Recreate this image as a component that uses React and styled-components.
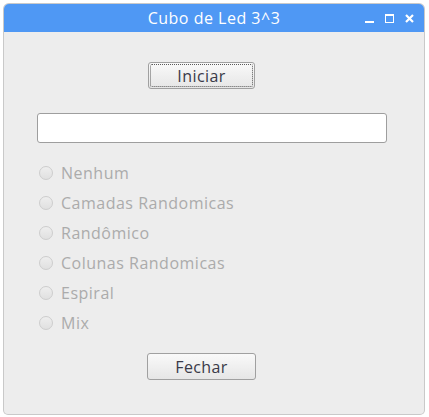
import React from "react";
import styled, { createGlobalStyle } from "styled-components";

const Global = createGlobalStyle`
  html, body { margin: 0; padding: 0; background: #ffffff; }
  body { font-family: "Open Sans", "DejaVu Sans", sans-serif; }
`;

const Page = styled.div`
  width: 429px;
  height: 417px;
  padding: 4px 0 0 4px;
  box-sizing: border-box;
  position: relative;
  overflow: hidden;
`;

const Window = styled.div`
  width: 420px;
  height: 410px;
  display: flex;
  flex-direction: column;
  border-radius: 5px 5px 4px 4px;
  overflow: hidden;
  box-shadow: 0 0 0 1px #c9c9c9;
  background: #ededed;
`;

const TitleBar = styled.div`
  height: 28px;
  background: #4f98f4;
  display: flex;
  align-items: center;
  justify-content: center;
  position: relative;
  flex-shrink: 0;
`;

const Title = styled.span`
  color: #ffffff;
  font-size: 16px;
  letter-spacing: 0.5px;
`;

const Controls = styled.div`
  position: absolute;
  right: 10px;
  top: 0;
  height: 28px;
  display: flex;
  align-items: center;
  gap: 11px;
`;

const Body = styled.div`
  flex: 1;
  display: flex;
  flex-direction: column;
  padding: 30px 0 0 33px;
`;

const Button = styled.button`
  width: ${(p) => p.$w}px;
  height: 27px;
  margin-left: ${(p) => p.$ml}px;
  border: 1px solid #a0a0a0;
  border-radius: 3px;
  background: linear-gradient(#f9f9f9, #e6e6e6);
  font-family: "Open Sans", "DejaVu Sans", sans-serif;
  font-size: 16px;
  letter-spacing: 0.4px;
  color: #3a3a48;
  padding: 0;
  position: relative;
  box-sizing: border-box;
  ${(p) =>
    p.$focus &&
    `&::after { content: ""; position: absolute; inset: 1px; border: 1px dotted #5a5a5a; border-radius: 2px; }`}
`;

const Input = styled.div`
  margin-top: 24px;
  width: 350px;
  height: 30px;
  box-sizing: border-box;
  background: #ffffff;
  border: 1px solid #9e9e9e;
  border-radius: 3px;
`;

const Options = styled.div`
  margin-top: 15px;
  display: flex;
  flex-direction: column;
`;

const Row = styled.div`
  height: 30px;
  display: flex;
  align-items: center;
  padding-left: 2px;
`;

const Radio = styled.span`
  width: 14px;
  height: 14px;
  box-sizing: border-box;
  border-radius: 50%;
  border: 1px solid #cdcdcd;
  background: linear-gradient(#eeeeee, #e0e0e0);
  margin-right: 8px;
`;

const Label = styled.span`
  color: #ababab;
  font-size: 16px;
  letter-spacing: 0.5px;
`;

const Bottom = styled.div`
  margin-top: 15px;
`;

const options = [
  "Nenhum",
  "Camadas Randomicas",
  "Randômico",
  "Colunas Randomicas",
  "Espiral",
  "Mix",
];

export default function App() {
  return (
    <Page>
      <Global />
      <Window>
        <TitleBar>
          <Title>Cubo de Led 3^3</Title>
          <Controls>
            <svg width="9" height="9" viewBox="0 0 9 9">
              <rect x="0" y="7" width="9" height="2" fill="#fff" />
            </svg>
            <svg width="9" height="9" viewBox="0 0 9 9">
              <rect x="0.5" y="0.5" width="8" height="8" fill="none" stroke="#fff" />
              <rect x="0" y="0" width="9" height="2" fill="#fff" />
            </svg>
            <svg width="9" height="9" viewBox="0 0 9 9">
              <path d="M1 1L8 8M8 1L1 8" stroke="#fff" strokeWidth="2.2" />
            </svg>
          </Controls>
        </TitleBar>
        <Body>
          <Button $w={107} $ml={111} $focus>
            Iniciar
          </Button>
          <Input />
          <Options>
            {options.map((o) => (
              <Row key={o}>
                <Radio />
                <Label>{o}</Label>
              </Row>
            ))}
          </Options>
          <Bottom>
            <Button $w={109} $ml={110}>
              Fechar
            </Button>
          </Bottom>
        </Body>
      </Window>
    </Page>
  );
}
